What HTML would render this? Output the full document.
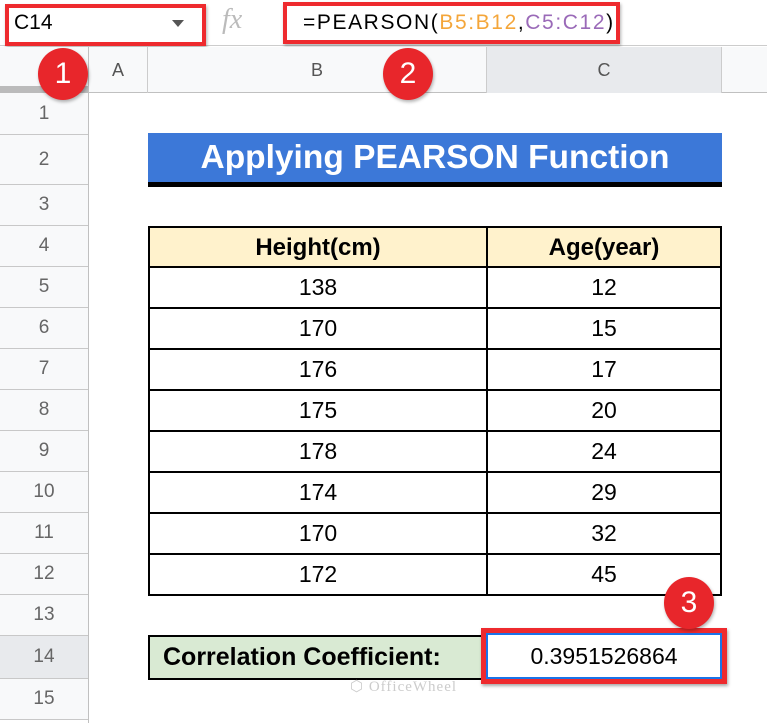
<!DOCTYPE html>
<html><head><style>
body{margin:0;width:767px;height:723px;overflow:hidden;background:#fff;font-family:"Liberation Sans",sans-serif;position:relative}
.a{position:absolute;box-sizing:border-box}
.rh{position:absolute;left:0;width:88px;border-bottom:1px solid #c8c8c8;background:#f8f9fa;color:#666;font-size:19px;display:flex;align-items:center;justify-content:center;box-sizing:border-box}
.cell{position:absolute;box-sizing:border-box;display:flex;align-items:center;justify-content:center;font-size:23px;color:#000}
.circ{position:absolute;width:50px;height:52px;border-radius:50%;background:#e8262b;color:#fff;font-size:30px;display:flex;align-items:center;justify-content:center;box-shadow:1px 2px 3px rgba(0,0,0,.3)}
</style></head><body>
<div class="a" style="left:0;top:0;width:767px;height:46px;background:#fff;border-bottom:1px solid #ccc"></div>
<div class="a" style="left:5px;top:4px;width:201px;height:42px;border:4px solid #ee2a2e;box-shadow:1px 2px 3px rgba(0,0,0,.3)"></div>
<div class="a" style="left:14px;top:8px;font-size:21px;color:#000;line-height:30px">C14</div>
<div class="a" style="left:172px;top:20px;width:0;height:0;border-left:6px solid transparent;border-right:6px solid transparent;border-top:7px solid #555"></div>
<div class="a" style="left:222px;top:4px;font-size:28px;color:#bbb;font-family:'Liberation Serif',serif;font-style:italic">fx</div>
<div class="a" style="left:283px;top:2px;width:337px;height:42px;border:4px solid #ee2a2e;box-shadow:1px 2px 3px rgba(0,0,0,.3)"></div>
<div class="a" style="left:303px;top:9px;font-size:21px;line-height:28px;letter-spacing:1.6px">=PEARSON(<span style="color:#f4a63a">B5:B12</span>,<span style="color:#9a6ab8">C5:C12</span>)</div>
<div class="a" style="left:0;top:47px;width:767px;height:46px;background:#f8f9fa;border-bottom:1px solid #c0c0c0"></div>
<div class="a" style="left:0;top:86px;width:88px;height:7px;background:#bbb"></div>
<div class="a" style="left:88px;top:47px;width:1px;height:676px;background:#c0c0c0"></div>
<div class="cell" style="left:89px;top:47px;width:59px;height:46px;font-size:18px;color:#555;border-right:1px solid #ccc">A</div>
<div class="cell" style="left:148px;top:47px;width:339px;height:46px;font-size:18px;color:#555;border-right:1px solid #ccc">B</div>
<div class="cell" style="left:487px;top:47px;width:235px;height:46px;font-size:18px;color:#555;background:#e8eaed;border-right:1px solid #ccc">C</div>
<div class="rh" style="top:93px;height:42px">1</div>
<div class="rh" style="top:135px;height:50px">2</div>
<div class="rh" style="top:185px;height:41px">3</div>
<div class="rh" style="top:226px;height:41px">4</div>
<div class="rh" style="top:267px;height:41px">5</div>
<div class="rh" style="top:308px;height:41px">6</div>
<div class="rh" style="top:349px;height:41px">7</div>
<div class="rh" style="top:390px;height:41px">8</div>
<div class="rh" style="top:431px;height:41px">9</div>
<div class="rh" style="top:472px;height:41px">10</div>
<div class="rh" style="top:513px;height:41px">11</div>
<div class="rh" style="top:554px;height:41px">12</div>
<div class="rh" style="top:595px;height:41px">13</div>
<div class="rh" style="top:636px;height:43px;background:#e8eaed">14</div>
<div class="rh" style="top:679px;height:41px">15</div>
<div class="cell" style="left:148px;top:133px;width:574px;height:54px;background:#3c78d8;border-bottom:5px solid #000;color:#fff;font-weight:bold;font-size:33.5px">Applying PEARSON Function</div>
<div class="a" style="left:148px;top:226px;width:574px;height:370px;border:2px solid #000"></div>
<div class="cell" style="left:150px;top:228px;width:570px;height:39px;background:#fff2cc"></div>
<div class="a" style="left:486px;top:226px;width:2px;height:370px;background:#000"></div>
<div class="cell" style="left:150px;top:228px;width:336px;height:39px;font-weight:bold;font-size:24px">Height(cm)</div>
<div class="cell" style="left:488px;top:228px;width:232px;height:39px;font-weight:bold;font-size:24px">Age(year)</div>
<div id="rows"></div>
<script>
var d=[[138,12],[170,15],[176,17],[175,20],[178,24],[174,29],[170,32],[172,45]],h='';
for(var i=0;i<8;i++){var t=267+41*i;
h+='<div class="a" style="left:148px;top:'+(t-1)+'px;width:574px;height:2px;background:#000"></div>';
h+='<div class="cell" style="left:150px;top:'+t+'px;width:336px;height:41px">'+d[i][0]+'</div>';
h+='<div class="cell" style="left:488px;top:'+t+'px;width:232px;height:41px">'+d[i][1]+'</div>';}
document.getElementById('rows').innerHTML=h;
</script>
<div class="cell" style="left:148px;top:635px;width:340px;height:45px;background:#d9ead3;border:2px solid #000;font-weight:bold;font-size:25px;justify-content:flex-start;padding-left:13px">Correlation Coefficient:</div>
<div class="a" style="left:481px;top:628px;width:246px;height:56px;border:5px solid #ee2a2e;box-shadow:1px 2px 3px rgba(0,0,0,.35)"></div>
<div class="cell" style="left:486px;top:633px;width:236px;height:46px;border:2px solid #1a73e8;font-size:23px">0.3951526864</div>
<div class="a" style="left:350px;top:677px;font-size:15px;color:#ccc;font-family:'Liberation Serif',serif;letter-spacing:1px">⬡ OfficeWheel</div>
<div class="circ" style="left:38px;top:48px">1</div>
<div class="circ" style="left:383px;top:48px">2</div>
<div class="circ" style="left:664px;top:577px">3</div>
</body></html>
